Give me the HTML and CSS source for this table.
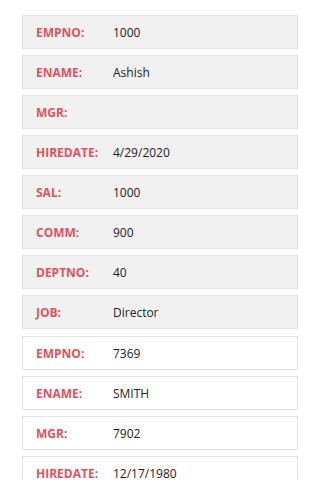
FILE: index.html
```html
<!DOCTYPE html>
<html lang="en">
<head>
    <meta charset="UTF-8">
    <meta name="viewport" content="width=device-width, initial-scale=1.0">
    <link rel="stylesheet" href="styles.css">
</head>
<body>
    <div class="emp-scroll">
        <div class="emp-list">
            <div class="emp-card emp-card-shaded">
                <div class="emp-row"><span class="emp-label">EMPNO:</span><span class="emp-value">1000</span></div>
                <div class="emp-row"><span class="emp-label">ENAME:</span><span class="emp-value">Ashish</span></div>
                <div class="emp-row"><span class="emp-label">MGR:</span><span class="emp-value"></span></div>
                <div class="emp-row"><span class="emp-label">HIREDATE:</span><span class="emp-value">4/29/2020</span></div>
                <div class="emp-row"><span class="emp-label">SAL:</span><span class="emp-value">1000</span></div>
                <div class="emp-row"><span class="emp-label">COMM:</span><span class="emp-value">900</span></div>
                <div class="emp-row"><span class="emp-label">DEPTNO:</span><span class="emp-value">40</span></div>
                <div class="emp-row"><span class="emp-label">JOB:</span><span class="emp-value">Director</span></div>
            </div>
            <div class="emp-card">
                <div class="emp-row"><span class="emp-label">EMPNO:</span><span class="emp-value">7369</span></div>
                <div class="emp-row"><span class="emp-label">ENAME:</span><span class="emp-value">SMITH</span></div>
                <div class="emp-row"><span class="emp-label">MGR:</span><span class="emp-value">7902</span></div>
                <div class="emp-row"><span class="emp-label">HIREDATE:</span><span class="emp-value">12/17/1980</span></div>
                <div class="emp-row"><span class="emp-label">SAL:</span><span class="emp-value">800</span></div>
                <div class="emp-row"><span class="emp-label">COMM:</span><span class="emp-value"></span></div>
            </div>
        </div>
    </div>
</body>
</html>
```

FILE: styles.css
```css
html, body {
    margin: 0;
    padding: 0;
}

body {
    background: white;
    font-family: 'Open Sans', 'Noto Sans', sans-serif;
    font-size: 12px;
    color: #222;
}

.emp-scroll {
    height: 479px;
    overflow: hidden;
}

.emp-list {
    width: 276px;
    padding-top: 15px;
    margin-left: 22px;
    display: flex;
    flex-direction: column;
    gap: 7px;
}

.emp-card {
    display: flex;
    flex-direction: column;
    gap: 6px;
}

.emp-row {
    display: flex;
    align-items: center;
    height: 34px;
    box-sizing: border-box;
    padding: 0 13px;
    border: 1px solid #e4e4e4;
    background: white;
}

.emp-card-shaded .emp-row {
    background: #f1f1f1;
    border-color: #e3e3e3;
}

.emp-label {
    width: 77px;
    flex-shrink: 0;
    font-weight: bold;
    color: #e0535e;
}

.emp-value {
    color: #222;
}
```
